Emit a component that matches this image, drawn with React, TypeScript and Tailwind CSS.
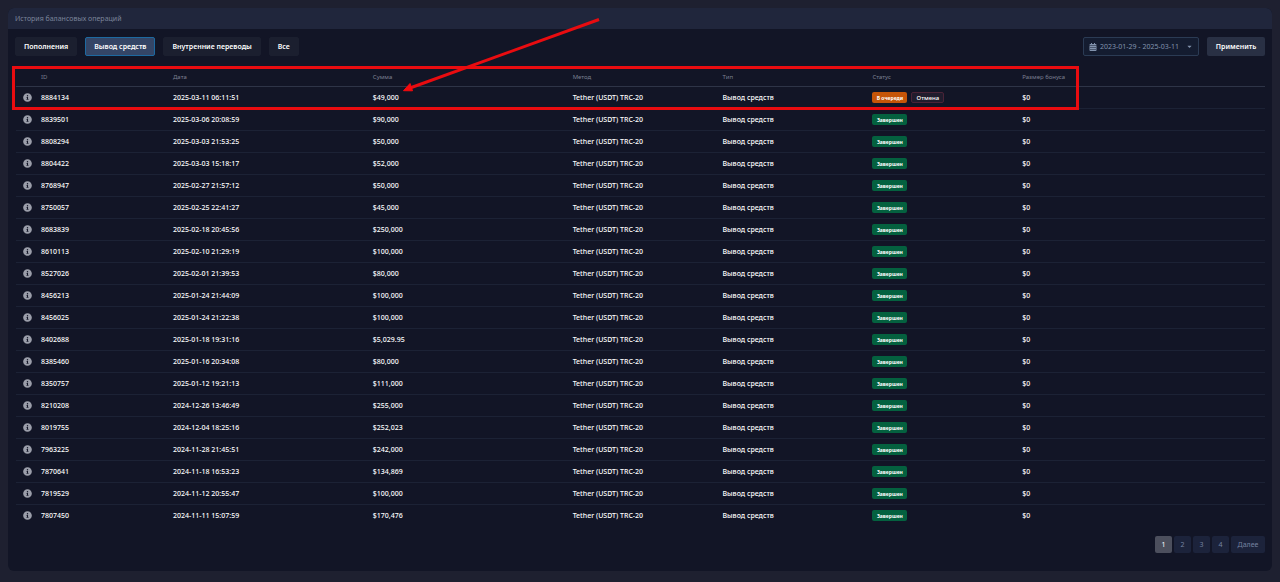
import { FaCalendarAlt, FaCaretDown, FaInfoCircle } from "react-icons/fa";

const tabs = ["Пополнения", "Вывод средств", "Внутренние переводы", "Все"];

const columns = [
  ["ID", "w-[132px]"],
  ["Дата", "w-[16%]"],
  ["Сумма", "w-[16%]"],
  ["Метод", "w-[12%]"],
  ["Тип", "w-[12%]"],
  ["Статус", "w-[12%]"],
  ["Размер бонуса", ""],
];

const operations = [
  ["8884134", "2025-03-11 06:11:51", "$49,000"],
  ["8839501", "2025-03-06 20:08:59", "$90,000"],
  ["8808294", "2025-03-03 21:53:25", "$50,000"],
  ["8804422", "2025-03-03 15:18:17", "$52,000"],
  ["8768947", "2025-02-27 21:57:12", "$50,000"],
  ["8750057", "2025-02-25 22:41:27", "$45,000"],
  ["8683839", "2025-02-18 20:45:56", "$250,000"],
  ["8610113", "2025-02-10 21:29:19", "$100,000"],
  ["8527026", "2025-02-01 21:39:53", "$80,000"],
  ["8456213", "2025-01-24 21:44:09", "$100,000"],
  ["8456025", "2025-01-24 21:22:38", "$100,000"],
  ["8402688", "2025-01-18 19:31:16", "$5,029.95"],
  ["8385460", "2025-01-16 20:34:08", "$80,000"],
  ["8350757", "2025-01-12 19:21:13", "$111,000"],
  ["8210208", "2024-12-26 13:46:49", "$255,000"],
  ["8019755", "2024-12-04 18:25:16", "$252,023"],
  ["7963225", "2024-11-28 21:45:51", "$242,000"],
  ["7870641", "2024-11-18 16:53:23", "$134,869"],
  ["7819529", "2024-11-12 20:55:47", "$100,000"],
  ["7807450", "2024-11-11 15:07:59", "$170,476"],
];

function Status({ pending }: { pending: boolean }) {
  if (!pending) {
    return (
      <span className="flex h-[11px] w-[35px] items-center justify-center rounded-xs bg-[#04613f] text-[5px] font-bold">
        Завершен
      </span>
    );
  }
  return (
    <div className="flex gap-1">
      <span className="flex h-[11px] w-[35px] items-center justify-center rounded-xs bg-[#c65508] text-[5px] font-bold">
        В очереди
      </span>
      <button className="flex h-[11px] w-[33px] items-center justify-center rounded-xs border border-[#4a2337] bg-[#211c2d] text-[6px] font-medium">
        Отмена
      </button>
    </div>
  );
}

function OperationsTable() {
  return (
    <table className="w-full table-fixed border-collapse text-left">
      <thead>
        <tr className="h-5 text-[6px] leading-3 text-[#7a7f90]">
          <th className="w-[25px] p-0" />
          {columns.map(([title, width]) => (
            <th key={title} className={`${width} p-0 pt-0.5 font-normal`}>
              {title}
            </th>
          ))}
        </tr>
      </thead>
      <tbody>
        {operations.map(([id, date, amount], idx) => (
          <tr
            key={id}
            className="h-[22px] border-t border-[#1c2235] text-[7px] leading-3 font-medium text-white first:border-[#2e3447]"
          >
            <td className="p-0">
              <FaInfoCircle className="ml-[7px] size-[9px] text-[#9b9eaa]" />
            </td>
            <td className="p-0 pt-px">{id}</td>
            <td className="p-0 pt-px">{date}</td>
            <td className="p-0 pt-px">{amount}</td>
            <td className="p-0 pt-px">Tether (USDT) TRC-20</td>
            <td className="p-0 pt-px">Вывод средств</td>
            <td className="p-0 pt-px">
              <Status pending={idx === 0} />
            </td>
            <td className="p-0 pt-px">$0</td>
          </tr>
        ))}
      </tbody>
    </table>
  );
}

// Red frame round the newest operation, with an arrow to its amount
function Highlight() {
  return (
    <>
      <div className="pointer-events-none absolute top-0 -left-1 h-[44px] w-[1067px] border-3 border-[#e90c10]" />
      <svg
        className="pointer-events-none absolute -top-[50px] left-[384px]"
        width="204"
        height="80"
        fill="none"
      >
        <path d="M199 3.5L10 72" stroke="#e90c10" strokeWidth="3" />
        <path d="M3.5 74.7L10 67.5L12.5 74.8Z" fill="#f5090d" stroke="#f5090d" />
      </svg>
    </>
  );
}

export default function App() {
  return (
    <div className="min-h-screen bg-[#1e2030] p-2 font-['Noto_Sans',sans-serif] text-white">
      <section className="rounded-md bg-[#121526] pb-[18px]">
        <h1 className="flex h-[21px] items-center rounded-t-md bg-[#20263c] px-[7px] text-[7px] leading-3 text-[#7b849a]">
          История балансовых операций
        </h1>

        <div className="flex items-center justify-between px-[7px] pt-2">
          <div className="flex gap-2">
            {tabs.map((tab) => (
              <button
                key={tab}
                className={`h-[19px] rounded-xs border px-2 pt-px text-[7px] leading-3 font-semibold ${
                  tab === "Вывод средств"
                    ? "border-[#1d69a0] bg-[#344566]"
                    : "border-[#1b1f2f] bg-[#1b1f2f]"
                }`}
              >
                {tab}
              </button>
            ))}
          </div>
          <div className="flex gap-2">
            <button className="flex h-[19px] w-[116px] items-center gap-[3px] rounded-xs border border-[#2b3b54] bg-[#141c30] px-[5px] text-[7px] leading-3 text-[#8293ad]">
              <FaCalendarAlt className="size-2" />
              2023-01-29 - 2025-03-11
              <FaCaretDown className="ml-auto size-[7px]" />
            </button>
            <button className="h-[19px] w-[58px] rounded-xs bg-[#293044] pt-px text-[7px] leading-3 font-semibold">
              Применить
            </button>
          </div>
        </div>

        <div className="relative mr-[7px] ml-2 pt-[10px]">
          <OperationsTable />
          <div className="absolute top-[10px] left-0">
            <Highlight />
          </div>
        </div>

        <nav className="mt-[10px] flex justify-end gap-[2px] px-[7px] text-[7px] leading-3 text-[#7582a0]">
          {["1", "2", "3", "4"].map((page) => (
            <button
              key={page}
              className={`size-[17px] rounded-xs pt-px ${
                page === "1" ? "bg-[#4c4f5d] text-white" : "bg-[#1c233b]"
              }`}
            >
              {page}
            </button>
          ))}
          <button className="h-[17px] w-[34px] rounded-xs bg-[#1c233b] pt-px">
            Далее
          </button>
        </nav>
      </section>
    </div>
  );
}
